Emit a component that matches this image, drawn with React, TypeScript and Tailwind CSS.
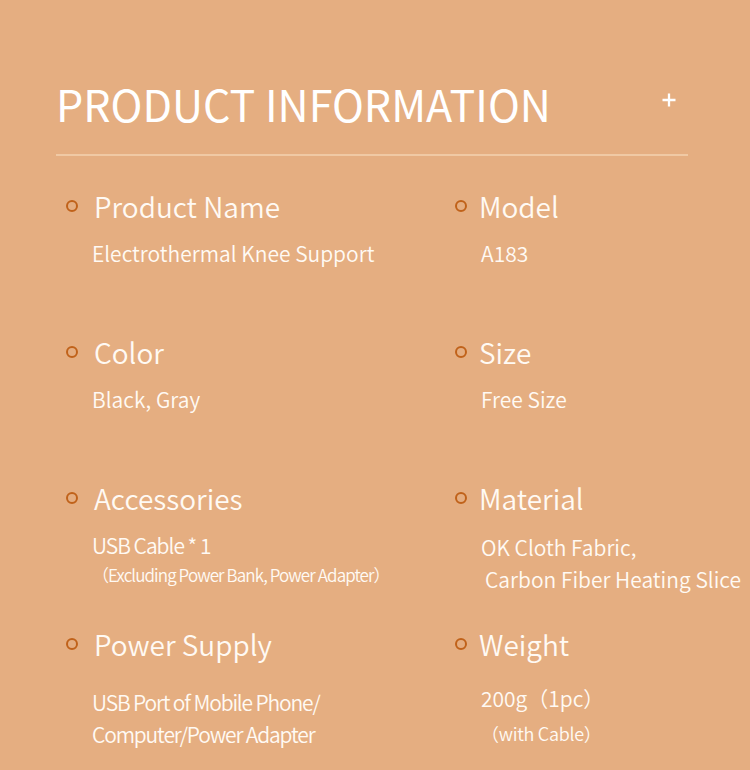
import React from "react";

const font = { fontFamily: '"Noto Sans CJK SC", "Noto Sans", sans-serif' };

function Bullet() {
  return (
    <span className="block w-[12px] h-[12px] rounded-full border-[2px] border-[#c0621a] shrink-0" />
  );
}

function Label({ text, gap }: { text: string; gap: string }) {
  return (
    <div className={`flex items-center h-[36px] ${gap}`}>
      <div className="mt-[0px]">
        <Bullet />
      </div>
      <span className="text-[28px] leading-[36px] font-[350] text-[#fffaf4]">{text}</span>
    </div>
  );
}

export default function App() {
  return (
    <div className="w-[750px] h-[770px] bg-[#e5ae81] overflow-hidden text-white" style={font}>
      <div className="pt-[78px] pl-[56px] pr-[74px] flex items-start justify-between">
        <h1 className="text-[43px] leading-[50px] font-normal text-white">PRODUCT INFORMATION</h1>
        <svg width="14" height="14" viewBox="0 0 14 14" className="mt-[15px]">
          <path d="M7 0.5V13.5M0.5 7H13.5" stroke="#ffffff" strokeWidth="2.3" />
        </svg>
      </div>
      <div className="ml-[56px] w-[632px] h-[2px] bg-[#f0c9a4] mt-[26px]" />

      <div className="grid grid-cols-[389px_1fr] pl-[66px] mt-[32px]">
        {/* Row 1 */}
        <div className="h-[146px]">
          <Label text="Product Name" gap="gap-[16px]" />
          <div className="ml-[26px] mt-[15px] text-[21px] leading-[28px] font-[350] text-[#fffaf4]">Electrothermal Knee Support</div>
        </div>
        <div className="h-[146px]">
          <Label text="Model" gap="gap-[12px]" />
          <div className="ml-[26px] mt-[15px] text-[21px] leading-[28px] font-[350] text-[#fffaf4]">A183</div>
        </div>

        {/* Row 2 */}
        <div className="h-[146px]">
          <Label text="Color" gap="gap-[16px]" />
          <div className="ml-[26px] mt-[15px] text-[21px] leading-[28px] font-[350] text-[#fffaf4]">Black, Gray</div>
        </div>
        <div className="h-[146px]">
          <Label text="Size" gap="gap-[12px]" />
          <div className="ml-[26px] mt-[15px] text-[21px] leading-[28px] font-[350] text-[#fffaf4]">Free Size</div>
        </div>

        {/* Row 3 */}
        <div className="h-[146px]">
          <Label text="Accessories" gap="gap-[16px]" />
          <div className="ml-[26px] mt-[15px] text-[21px] leading-[28px] font-[350] tracking-[-1px] text-[#fffaf4]">USB Cable * 1</div>
          <div className="ml-[26px] mt-[4px] text-[17px] leading-[24px] font-[350] tracking-[-0.9px] text-[#fffaf4]">（Excluding Power Bank, Power Adapter）</div>
        </div>
        <div className="h-[146px]">
          <Label text="Material" gap="gap-[12px]" />
          <div className="ml-[26px] mt-[15px] text-[21px] leading-[32px] font-[350] text-[#fffaf4]">
            <div>OK Cloth Fabric,</div>
            <div className="pl-[4px]">Carbon Fiber Heating Slice</div>
          </div>
        </div>

        {/* Row 4 */}
        <div className="h-[146px]">
          <Label text="Power Supply" gap="gap-[16px]" />
          <div className="ml-[26px] mt-[24px] text-[21px] leading-[32px] font-[350] tracking-[-1.15px] text-[#fffaf4]">
            <div>USB Port of Mobile Phone/</div>
            <div>Computer/Power Adapter</div>
          </div>
        </div>
        <div className="h-[146px]">
          <Label text="Weight" gap="gap-[12px]" />
          <div className="ml-[26px] mt-[20px] text-[21px] leading-[32px] font-[350] text-[#fffaf4]">200g（1pc）</div>
          <div className="ml-[26px] mt-[5px] text-[18px] leading-[28px] font-[350] tracking-[-0.3px] text-[#fffaf4]">（with Cable）</div>
        </div>
      </div>
    </div>
  );
}
